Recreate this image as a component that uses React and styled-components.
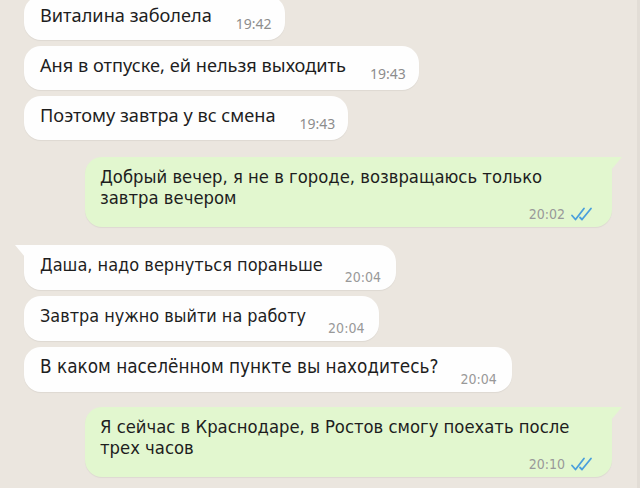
import React from 'react';
import styled, { createGlobalStyle, css } from 'styled-components';

const GlobalStyle = createGlobalStyle`
    html, body {
        margin: 0;
        padding: 0;
        background: #ebe6df;
    }
    body {
        width: 640px;
        height: 488px;
        overflow: hidden;
    }
`;

const Chat = styled.div`
    display: flex;
    flex-direction: column;
    padding: 0 25px 0 24px;
    margin-top: -4px;
    height: 492px;
    box-sizing: border-box;
    background: #ebe6df;
    border-right: 3px solid #e2ddd6;
`;

const Row = styled.div`
    display: flex;
    justify-content: ${p => (p.$out ? 'flex-end' : 'flex-start')};
    margin-top: ${p => p.$gap || 0}px;
`;

const wide = css`
    font-family: "Noto Sans", Roboto, sans-serif;
`;
const narrow = css`
    font-family: "DejaVu Sans Condensed", "DejaVu Sans", sans-serif;
    font-stretch: condensed;
`;

const Incoming = styled.div`
    position: relative;
    display: flex;
    align-items: flex-end;
    background: #fefefe;
    border-radius: 17px;
    box-shadow: 0 1px 1px rgba(0, 0, 0, 0.06);
    padding: ${p => (p.$narrow ? '7px 15px 12px 16px' : '7px 13px 13px 16px')};
    ${p => p.$tail && css`
        border-top-left-radius: 0;
        &::before {
            content: '';
            position: absolute;
            left: -9px;
            top: 0;
            width: 10px;
            height: 12px;
            background: #fefefe;
            clip-path: polygon(0 0, 100% 0, 100% 100%);
        }
    `}
`;

const Text = styled.span`
    ${p => (p.$narrow ? narrow : wide)};
    font-size: ${p => p.$size}px;
    line-height: ${p => (p.$narrow ? 26 : 24)}px;
    color: #1e1e1e;
    white-space: nowrap;
`;

const Time = styled.span`
    ${p => (p.$narrow ? narrow : wide)};
    font-size: 14px;
    line-height: 16px;
    color: ${p => (p.$narrow ? '#999' : '#8d8d8d')};
    margin-left: ${p => (p.$narrow ? 22 : 24)}px;
    margin-bottom: ${p => (p.$narrow ? -7 : -5)}px;
    white-space: nowrap;
`;

const Outgoing = styled.div`
    position: relative;
    width: 527px;
    box-sizing: border-box;
    background: #e2f7cf;
    border-radius: 17px;
    border-top-right-radius: 0;
    box-shadow: 0 1px 1px rgba(0, 0, 0, 0.06);
    padding: 9px 15px 5px 15px;
    &::after {
        content: '';
        position: absolute;
        right: -10px;
        top: 0;
        width: 11px;
        height: 13px;
        background: #e2f7cf;
        clip-path: polygon(0 0, 100% 0, 0 100%);
    }
`;

const OutText = styled.div`
    ${narrow};
    font-size: 18.3px;
    line-height: 21px;
    color: #1e1e1e;
    padding-right: 12px;
`;

const Meta = styled.div`
    display: flex;
    justify-content: flex-end;
    align-items: center;
    gap: 5px;
    margin-top: -2px;
`;

const OutTime = styled.span`
    ${narrow};
    font-size: 14px;
    line-height: 16px;
    color: #999;
`;

const Ticks = () => (
    <svg width="27" height="14" viewBox="0 0 27 14" fill="none">
        <path d="M2 8.5 L5.5 12.5 L14 1.5" stroke="#4a9fdc" strokeWidth="1.8" strokeLinecap="round" strokeLinejoin="round" />
        <path d="M10 10.5 L12 12.5 L21 1.5" stroke="#4a9fdc" strokeWidth="1.8" strokeLinecap="round" strokeLinejoin="round" />
    </svg>
);

const messages = [
    { text: 'Виталина заболела', time: '19:42', size: 18.2 },
    { text: 'Аня в отпуске, ей нельзя выходить', time: '19:43', size: 18.2, gap: 6 },
    { text: 'Поэтому завтра у вс смена', time: '19:43', size: 18.2, gap: 6 },
    { out: true, text: 'Добрый вечер, я не в городе, возвращаюсь только завтра вечером', time: '20:02', gap: 17 },
    { narrow: true, tail: true, text: 'Даша, надо вернуться пораньше', time: '20:04', size: 18, gap: 18 },
    { narrow: true, text: 'Завтра нужно выйти на работу', time: '20:04', size: 17.9, gap: 6 },
    { narrow: true, text: 'В каком населённом пункте вы находитесь?', time: '20:04', size: 18.8, gap: 6 },
    { out: true, text: 'Я сейчас в Краснодаре, в Ростов смогу поехать после трех часов', time: '20:10', gap: 15 },
];

const App = () => {
    return (
        <>
            <GlobalStyle />
            <Chat>
                {messages.map((m, idx) => (
                    <Row key={idx} $out={m.out} $gap={m.gap}>
                        {m.out ? (
                            <Outgoing>
                                <OutText>{m.text}</OutText>
                                <Meta>
                                    <OutTime>{m.time}</OutTime>
                                    <Ticks />
                                </Meta>
                            </Outgoing>
                        ) : (
                            <Incoming $narrow={m.narrow} $tail={m.tail}>
                                <Text $narrow={m.narrow} $size={m.size}>{m.text}</Text>
                                <Time $narrow={m.narrow}>{m.time}</Time>
                            </Incoming>
                        )}
                    </Row>
                ))}
            </Chat>
        </>
    );
};

export default App;
